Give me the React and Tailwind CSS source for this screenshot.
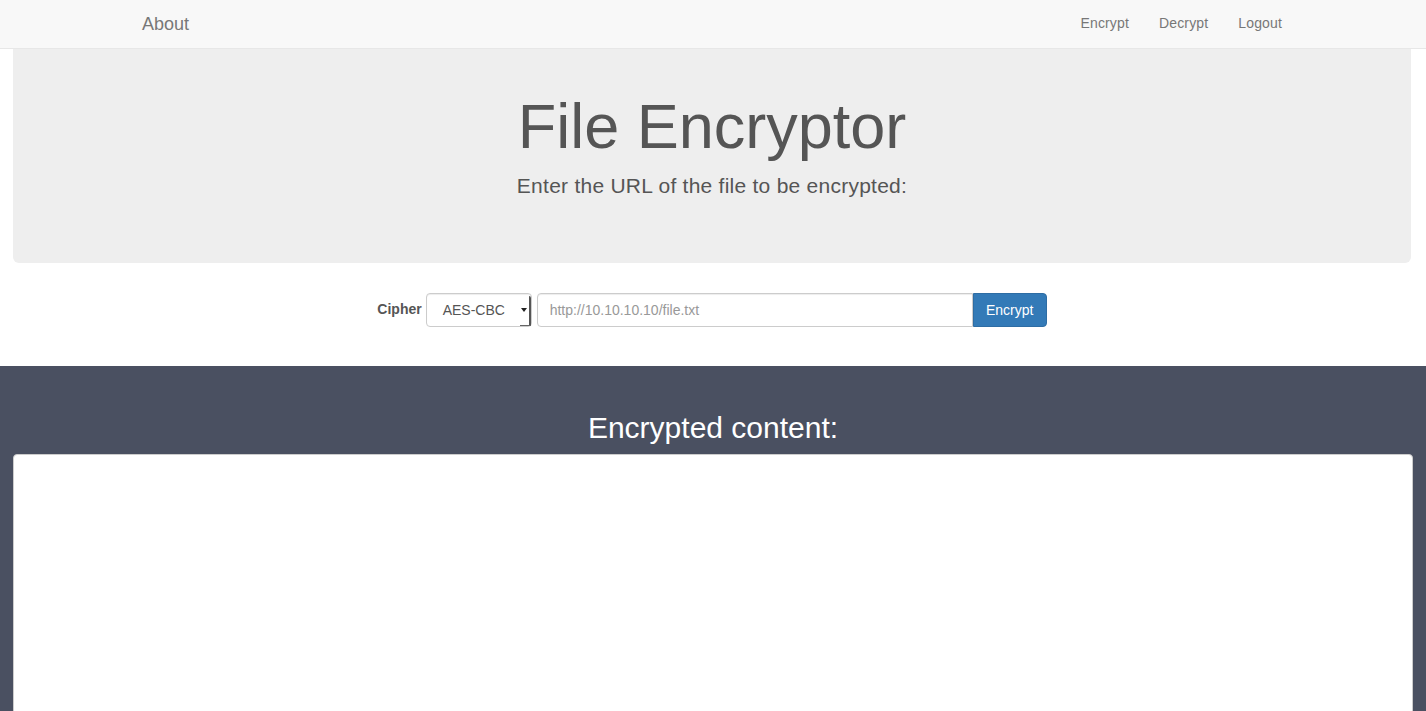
export default function App() {
  return (
    <div className="min-h-[711px] bg-white text-[14px] text-[#333]" style={{ fontFamily: '"Liberation Sans", Arial, sans-serif' }}>
      {/* Navbar */}
      <nav className="h-[49px] bg-[#f8f8f8] border-b border-[#e7e7e7]">
        <div className="w-[1170px] mx-auto px-[15px] h-full flex items-center justify-between">
          <a className="text-[18px] text-[#777] leading-[20px] -ml-px">About</a>
          <ul className="flex items-center -mr-[14px] -mt-[2px] text-[#777] text-[14px] tracking-[0.15px]">
            <li className="px-[15px]">Encrypt</li>
            <li className="px-[15px]">Decrypt</li>
            <li className="px-[15px]">Logout</li>
          </ul>
        </div>
      </nav>

      {/* Jumbotron */}
      <div className="mx-[13px] w-[1398px] h-[214px] bg-[#eeeeee] rounded-b-[6px] text-center text-[#555] pt-[43px]">
        <h1 className="text-[63px] leading-[1.1]">File Encryptor</h1>
        <p className="text-[21px] leading-[30px] mt-[10px] tracking-[0.25px]">Enter the URL of the file to be encrypted:</p>
      </div>

      {/* Form */}
      <div className="flex justify-center items-center mt-[30px] h-[34px] pr-[2px]">
        <label className="font-bold text-[#555] mr-[4px] -mt-[2px]">Cipher</label>
        <div className="relative w-[106px] h-[34px] bg-white border border-[#ccc] rounded-[4px] shadow-[inset_0_1px_1px_rgba(0,0,0,0.075)] flex items-center pl-[16px] text-[#555]">
          AES-CBC
          <span className="absolute right-[4px] top-[14px] w-0 h-0 border-l-[3px] border-r-[3px] border-t-[4px] border-l-transparent border-r-transparent border-t-[#222]"></span>
          <span className="absolute right-0 top-[2px] bottom-[1px] w-[2px] bg-[#555] rounded-tr-[2px]"></span>
          <span className="absolute right-0 bottom-0 w-[11px] h-[1px] bg-[#666]"></span>
        </div>
        <div className="flex ml-[5px]">
          <div className="w-[436px] h-[34px] bg-white border border-[#ccc] rounded-l-[4px] shadow-[inset_0_1px_1px_rgba(0,0,0,0.075)] flex items-center pl-[12px] text-[#999]">
            http://10.10.10.10/file.txt
          </div>
          <button className="w-[74px] h-[34px] bg-[#337ab7] border border-[#2e6da4] rounded-r-[4px] text-white text-[14px]">
            Encrypt
          </button>
        </div>
      </div>

      {/* Output */}
      <div className="mt-[39px] bg-[#4a5061] pt-[45px] h-[345px] overflow-hidden">
        <h2 className="text-center text-white text-[30px] leading-[33px]">Encrypted content:</h2>
        <div className="mx-[13px] mt-[10px] h-[300px] bg-white border border-[#ccc] rounded-[4px]"></div>
      </div>
    </div>
  );
}
